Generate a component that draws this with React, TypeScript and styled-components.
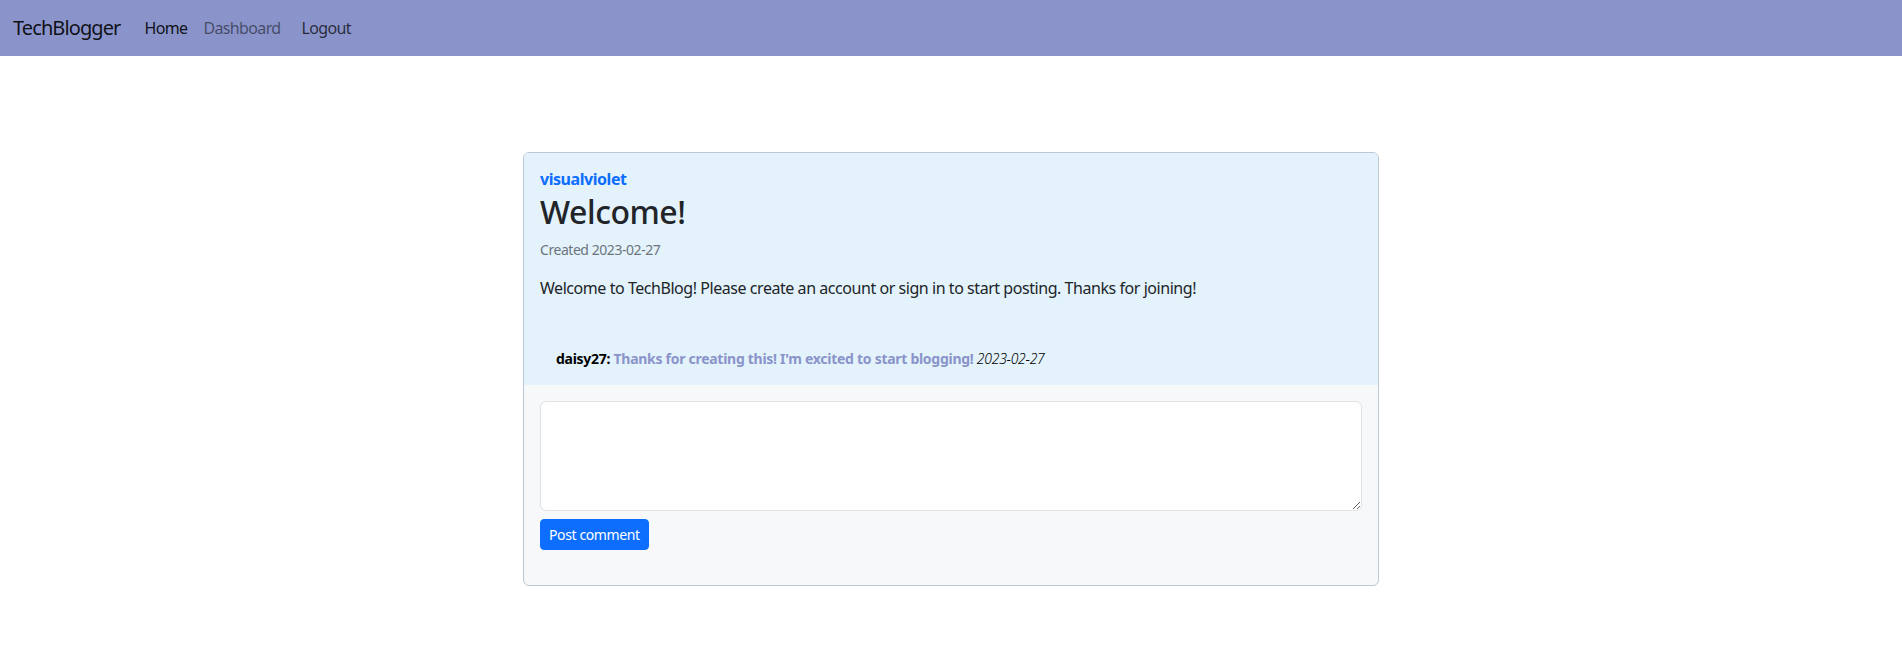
import React from "react";
import styled, { createGlobalStyle } from "styled-components";

const FONT = `"Segoe UI", "Noto Sans", "Liberation Sans", sans-serif`;

const GlobalStyle = createGlobalStyle`
  *, *::before, *::after { box-sizing: border-box; }
  html, body { margin: 0; padding: 0; background: #ffffff; }
  body {
    font-family: ${FONT};
    font-size: 16px;
    line-height: 1.5;
    letter-spacing: -0.028em;
    color: #212529;
  }
`;

const Navbar = styled.nav`
  display: flex;
  align-items: center;
  height: 56px;
  padding: 8px 13px;
  background: #8a94ca;
`;

const Brand = styled.a`
  font-size: 20px;
  line-height: 30px;
  letter-spacing: -0.045em;
  color: rgba(0, 0, 0, 0.9);
  text-decoration: none;
  margin-right: 24px;
`;

const NavList = styled.div`
  display: flex;
  align-items: center;
`;

const NavLink = styled.a<{ $tone: "active" | "muted" | "dark"; $gap?: number }>`
  font-size: 16px;
  line-height: 24px;
  letter-spacing: -0.04em;
  text-decoration: none;
  margin-right: ${(p) => p.$gap ?? 16}px;
  color: ${(p) =>
    p.$tone === "active"
      ? "rgba(0, 0, 0, 0.9)"
      : p.$tone === "muted"
      ? "rgba(0, 0, 0, 0.5)"
      : "rgba(0, 0, 0, 0.72)"};
`;

const Main = styled.main`
  display: flex;
  justify-content: center;
  padding-top: 96px;
  padding-bottom: 60px;
`;

const Card = styled.article`
  width: 856px;
  border: 1px solid #bcc7d3;
  border-radius: 6px;
  overflow: hidden;
  background: #f7f8fa;
`;

const CardBody = styled.section`
  background: #e3f2fb;
  padding: 16px 16px 16px;
`;

const Author = styled.div`
  font-weight: 700;
  color: #0d6efd;
  line-height: 24px;
  margin-top: -2px;
  margin-bottom: 2px;
`;

const Title = styled.h2`
  margin: 0 0 8px;
  font-size: 32px;
  font-weight: 500;
  line-height: 1.2;
  color: #212529;
`;

const Meta = styled.p`
  margin: 0 0 16px;
  font-size: 14px;
  line-height: 21px;
  color: #6c757d;
`;

const Content = styled.p`
  margin: 0;
  line-height: 24px;
`;

const Comments = styled.ul`
  list-style: none;
  margin: 48px 0 0;
  padding: 0 0 0 16px;
`;

const CommentItem = styled.li`
  font-size: 14px;
  line-height: 21px;
  letter-spacing: -0.02em;
`;

const CommentUser = styled.span`
  font-weight: 700;
  color: #000000;
`;

const CommentText = styled.span`
  font-weight: 700;
  color: #8a94ca;
`;

const CommentDate = styled.em`
  font-weight: 300;
  color: #000000;
`;

const CardFooter = styled.form`
  display: flex;
  flex-direction: column;
  align-items: flex-start;
  padding: 16px 16px 35px;
`;

const TextArea = styled.textarea`
  display: block;
  width: 100%;
  height: 110px;
  padding: 6px 12px;
  font-family: ${FONT};
  font-size: 16px;
  line-height: 24px;
  color: #212529;
  background: #ffffff;
  border: 1px solid #dee2e6;
  border-radius: 6px;
  resize: vertical;
  outline: none;
`;

const Button = styled.button`
  margin-top: 8px;
  padding: 4px 8px;
  font-family: ${FONT};
  font-size: 14px;
  line-height: 21px;
  letter-spacing: -0.028em;
  color: #ffffff;
  background: #0d6efd;
  border: 1px solid #0d6efd;
  border-radius: 4px;
  cursor: pointer;
`;

export default function App() {
  return (
    <>
      <GlobalStyle />
      <Navbar>
        <Brand href="#">TechBlogger</Brand>
        <NavList>
          <NavLink href="#" $tone="active">Home</NavLink>
          <NavLink href="#" $tone="muted" $gap={21}>Dashboard</NavLink>
          <NavLink href="#" $tone="dark">Logout</NavLink>
        </NavList>
      </Navbar>
      <Main>
        <Card>
          <CardBody>
            <Author>visualviolet</Author>
            <Title>Welcome!</Title>
            <Meta>Created 2023-02-27</Meta>
            <Content>
              Welcome to TechBlog! Please create an account or sign in to start posting. Thanks for joining!
            </Content>
            <Comments>
              <CommentItem>
                <CommentUser>daisy27:</CommentUser>{" "}
                <CommentText>Thanks for creating this! I'm excited to start blogging!</CommentText>{" "}
                <CommentDate>2023-02-27</CommentDate>
              </CommentItem>
            </Comments>
          </CardBody>
          <CardFooter onSubmit={(e) => e.preventDefault()}>
            <TextArea rows={4} />
            <Button type="submit">Post comment</Button>
          </CardFooter>
        </Card>
      </Main>
    </>
  );
}
